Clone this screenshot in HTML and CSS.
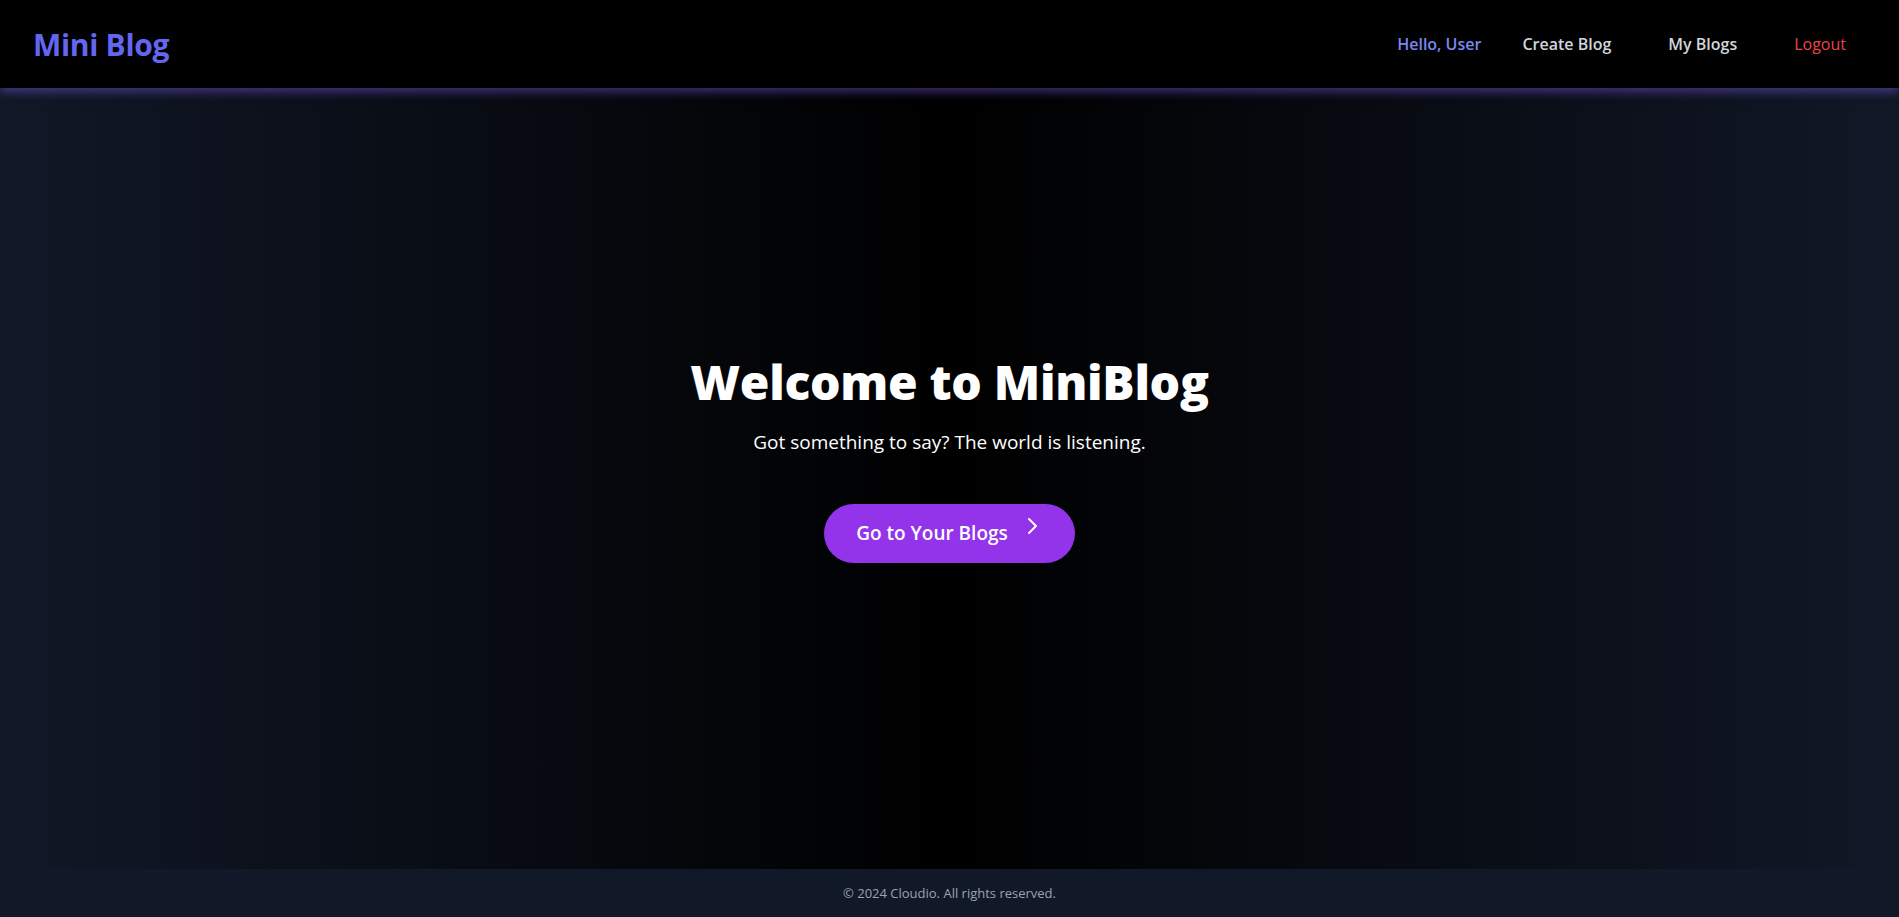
FILE: index.html
```html
<!DOCTYPE html>
<html lang="en">
<head>
<meta charset="utf-8">
<title>Mini Blog</title>
<link rel="stylesheet" href="styles.css">
</head>
<body>
<div class="page">
  <header class="navbar">
    <a class="logo" href="#">Mini Blog</a>
    <nav class="nav">
      <span class="greeting">Hello, User</span>
      <a class="nav-link" href="#">Create Blog</a>
      <a class="nav-link" href="#">My Blogs</a>
      <a class="nav-link logout" href="#">Logout</a>
    </nav>
  </header>
  <main class="hero">
    <h1 class="hero-title">Welcome to MiniBlog</h1>
    <p class="hero-sub">Got something to say? The world is listening.</p>
    <a class="cta" href="#">
      <span>Go to Your Blogs</span>
      <svg class="cta-icon" viewBox="0 0 24 24" fill="none" stroke="currentColor" stroke-width="2" stroke-linecap="round" stroke-linejoin="round"><path d="M9 5l7 7-7 7"/></svg>
    </a>
  </main>
  <footer class="footer">© 2024 Cloudio. All rights reserved.</footer>
</div>
</body>
</html>
```
FILE: styles.css
```css
* { box-sizing: border-box; }
html, body { margin: 0; padding: 0; height: 100%; }
body {
  font-family: "Open Sans", "Noto Sans", sans-serif;
  background: #111827;
  color: #fff;
}
a { text-decoration: none; }
.page {
  display: flex;
  flex-direction: column;
  min-height: 100vh;
}
.navbar {
  position: relative;
  z-index: 2;
  height: 88px;
  flex: 0 0 88px;
  background: #000;
  display: flex;
  align-items: center;
  justify-content: space-between;
  padding: 0 37px 0 33px;
  box-shadow: 0 3px 10px rgba(124, 88, 230, 0.55);
}
.logo {
  color: #6366f1;
  font-size: 30px;
  font-weight: 700;
  letter-spacing: -0.3px;
}
.nav {
  display: flex;
  align-items: center;
  gap: 25px;
  font-size: 16px;
  font-weight: 600;
}
.greeting { color: #7c86ef; }
.nav-link { color: #d1d5db; padding: 0 16px; }
.nav-link.logout { color: #ef4444; font-weight: 500; }
.hero {
  flex: 1;
  display: flex;
  flex-direction: column;
  align-items: center;
  justify-content: center;
  text-align: center;
  background: linear-gradient(to right, #111827, #000 50%, #111827);
  padding-bottom: 37px;
}
.hero-title {
  margin: 0 0 22px;
  font-size: 48px;
  line-height: 1;
  font-weight: 800;
  letter-spacing: -0.3px;
}
.hero-sub {
  margin: 0 0 48px;
  font-size: 19px;
  line-height: 28px;
}
.cta {
  display: inline-flex;
  align-items: center;
  height: 59px;
  padding: 0 31px 0 32px;
  border-radius: 9999px;
  background: #9333ea;
  color: #fff;
  font-size: 19px;
  font-weight: 600;
}
.cta-icon {
  width: 24px;
  height: 24px;
  margin-left: 12px;
  margin-bottom: 14px;
}
.footer {
  flex: 0 0 48px;
  display: flex;
  align-items: center;
  justify-content: center;
  background: #111827;
  color: #9ca3af;
  font-size: 13px;
}
```
